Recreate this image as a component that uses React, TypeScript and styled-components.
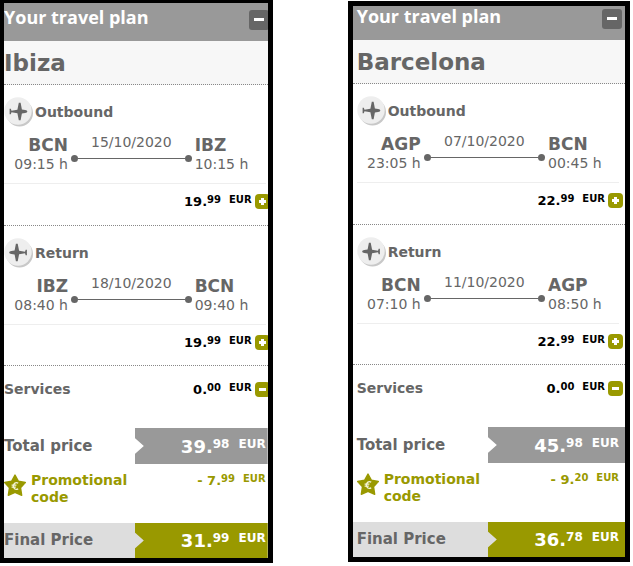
import React from 'react';
import styled, { createGlobalStyle } from 'styled-components';

const GlobalStyle = createGlobalStyle`
  * { box-sizing: border-box; }
  body {
    margin: 0;
    background: #fff;
    color: #666;
    font-family: Verdana, 'DejaVu Sans', sans-serif;
    font-size: 14px;
    line-height: 17px;
  }
`;

const Page = styled.main`
  display: flex;
  align-items: flex-start;
  gap: 75px;
  padding-right: 3px;
`;

const Card = styled.section<{ $compact: boolean }>`
  --start: ${(p) => (p.$compact ? '0px' : '4px')};
  --end: ${(p) => (p.$compact ? '2px' : '6px')};
  flex: ${(p) => (p.$compact ? 273 : 282)} 1 0;
  min-width: 0;
  margin-top: ${(p) => (p.$compact ? 0 : 1)}px;
  border: solid #000;
  border-width: ${(p) => (p.$compact ? '3px 5px 5px 4px' : '5px')};
  overflow: hidden;
`;

const Header = styled.header<{ $compact: boolean }>`
  display: flex;
  justify-content: space-between;
  align-items: flex-start;
  padding: ${(p) => (p.$compact ? 7 : 3)}px var(--end) 11px var(--start);
  background: #999;
`;

const Heading = styled.h2`
  margin: -5px 0 0;
  color: #fff;
  font: 700 18px/25px 'Open Sans', sans-serif;
`;

const IconButton = styled.button<{ $large?: boolean }>`
  display: block;
  flex: none;
  margin: 0 ${(p) => (p.$large ? -3 : -4)}px 0 3px;
  padding: 0;
  width: ${(p) => (p.$large ? 20 : 15)}px;
  height: ${(p) => (p.$large ? 20 : 15)}px;
  border: 0;
  border-radius: ${(p) => (p.$large ? 3 : 4)}px;
  background: ${(p) => (p.$large ? '#666' : '#990')};
  cursor: pointer;

  svg { display: block; fill: #fff; }
`;

const Destination = styled.h1`
  margin: 0;
  padding: 9px var(--end) 8px var(--start);
  border-bottom: 1px dotted #888;
  background: #f7f7f7;
  font-size: 23px;
  line-height: 26px;
`;

const Leg = styled.section<{ $last?: boolean }>`
  padding: 12px var(--end) ${(p) => (p.$last ? 15 : 16)}px var(--start);
  border-bottom: 1px dotted #888;
`;

const LegTitle = styled.h3`
  display: flex;
  align-items: center;
  gap: 1px;
  height: 30px;
  margin: 0 0 8px;
  font-size: 14px;
`;

const Route = styled.div`
  display: grid;
  grid-template-columns: 64px 1fr 71px;
  column-gap: 3px;
  padding-bottom: 9px;
  border-bottom: 1px solid #eee;
`;

const Stop = styled.div<{ $align: 'left' | 'right' }>`
  text-align: ${(p) => p.$align};
  line-height: 19px;
  white-space: nowrap;
`;

const Airport = styled.strong`
  display: block;
  font-size: 17px;
  line-height: 20px;
`;

const Track = styled.div`
  text-align: center;
  line-height: 15px;
`;

const TrackLine = styled.div`
  display: flex;
  align-items: center;
  margin-top: 5px;

  &::before, &::after {
    content: '';
    width: 7px;
    height: 7px;
    border-radius: 50%;
    background: #666;
  }
`;

const Rail = styled.span`
  flex: 1;
  height: 1px;
  background: #666;
`;

const PriceRow = styled.div`
  display: flex;
  align-items: center;
  justify-content: flex-end;
  height: 15px;
  margin-top: 10px;
`;

const Services = styled.div`
  display: flex;
  align-items: center;
  height: 15px;
  margin: 16px var(--end) 31px var(--start);
`;

const Label = styled.strong`
  flex: 1;
`;

const Amount = styled.strong<{ $size: 'small' | 'large'; $color: string }>`
  color: ${(p) => p.$color};
  font-size: ${(p) => (p.$size === 'large' ? 18 : 13)}px;
  line-height: 17px;
  white-space: nowrap;

  span {
    margin-right: ${(p) => (p.$size === 'large' ? 9 : 8)}px;
  }
  span, small {
    font-size: ${(p) => (p.$size === 'large' ? 12 : 10)}px;
    line-height: 1;
    vertical-align: ${(p) => (p.$size === 'large' ? 5 : 3)}px;
  }
`;

const SumRow = styled.div<{ $final?: boolean }>`
  display: flex;
  align-items: stretch;
  height: ${(p) => (p.$final ? 35 : 36)}px;
  padding-left: var(--start);
  background: ${(p) => (p.$final ? '#ddd' : '#fff')};
`;

const SumLabel = styled.strong`
  flex: 1;
  align-self: center;
  font-size: 15px;
`;

const SumValue = styled.div<{ $final?: boolean }>`
  display: flex;
  align-items: center;
  justify-content: flex-end;
  width: calc(50% + var(--end) / 2);
  padding-right: var(--end);
  background: ${(p) => (p.$final ? '#990' : '#999')};
  clip-path: polygon(0 0, 100% 0, 100% 100%, 0 100%, 0 calc(50% + 8px), 9px 50%, 0 calc(50% - 8px));
`;

const Promotion = styled.div`
  display: flex;
  align-items: flex-start;
  gap: 5px;
  margin: 8px var(--end) 17px var(--start);
  color: #990;

  svg { flex: none; margin-top: 2px; }
`;

const PromotionLabel = styled.strong`
  flex: 1;
`;

const Plane = ({ back }: { back?: boolean }) => (
  <svg width="30" height="30" viewBox="0 0 30 30" aria-hidden="true">
    <circle cx="15.5" cy="16" r="13.5" fill="#c8c8c8" />
    <circle cx="14" cy="14" r="13.7" fill="#eee" />
    <g transform={back ? 'translate(28.5 0) scale(-1 1)' : undefined} fill="#666">
      <path d="M5.6 11.8h1.2l.7 1.9 5.9-1 1.4-6.9h1.8l1.3 6.7 3.2.5c1.4.3 2.2.8 2.2 1.5s-.8 1.2-2.2 1.5l-3.2.5-1.3 6.7h-1.8l-1.4-6.9-5.9-1-.7 1.9H5.6z" />
    </g>
  </svg>
);

const Star = () => (
  <svg width="22" height="23" viewBox="0 0 22 23" aria-hidden="true">
    <path d="M11 1l3.3 6.2 7 1.3-4.8 5.2 1.2 7.6L11 18.4l-6.7 2.9 1.2-7.6L.7 8.5l7-1.3z" fill="#990" stroke="#990" strokeWidth="1.4" strokeLinejoin="round" />
    <path d="M14.2 9.2c-2.5-1.2-4.8 0-4.8 2.9s2.3 4 4.8 2.8M7.6 11.2h4.8M7.6 13.1h4.2" fill="none" stroke="#f5f5d8" strokeWidth="1.3" />
  </svg>
);

const Sign = ({ plus }: { plus?: boolean }) => (
  <svg width="15" height="15" aria-hidden="true">
    <rect x="4" y="6" width="7" height="3" />
    {plus && <rect x="6" y="4" width="3" height="7" />}
  </svg>
);

type Size = 'small' | 'large';
const Price = ({ value, size = 'small', color = '#000' }: { value: string; size?: Size; color?: string }) => {
  const [whole, cents] = value.split('.');
  return (
    <Amount $size={size} $color={color}>
      {whole}.<span>{cents}</span><small>EUR</small>
    </Amount>
  );
};

interface Flight { from: string; departs: string; date: string; to: string; arrives: string; price: string }
interface Trip {
  compact: boolean; city: string; outbound: Flight; inbound: Flight;
  total: string; discount: string; final: string;
}

const FlightLeg = ({ title, flight, back }: { title: string; flight: Flight; back?: boolean }) => (
  <Leg $last={back}>
    <LegTitle><Plane back={back} />{title}</LegTitle>
    <Route>
      <Stop $align="right"><Airport>{flight.from}</Airport>{flight.departs} h</Stop>
      <Track>{flight.date}<TrackLine><Rail /></TrackLine></Track>
      <Stop $align="left"><Airport>{flight.to}</Airport>{flight.arrives} h</Stop>
    </Route>
    <PriceRow>
      <Price value={flight.price} />
      <IconButton type="button" aria-label={`Show ${title} price details`}><Sign plus /></IconButton>
    </PriceRow>
  </Leg>
);

const TravelPlan = ({ trip }: { trip: Trip }) => (
  <Card $compact={trip.compact}>
    <Header $compact={trip.compact}>
      <Heading>Your travel plan</Heading>
      <IconButton $large type="button" aria-label="Collapse travel plan">
        <svg width="20" height="20" aria-hidden="true"><rect x="5" y="8" width="10" height="3" /></svg>
      </IconButton>
    </Header>
    <Destination>{trip.city}</Destination>
    <FlightLeg title="Outbound" flight={trip.outbound} />
    <FlightLeg title="Return" flight={trip.inbound} back />
    <Services>
      <Label>Services</Label>
      <Price value="0.00" />
      <IconButton type="button" aria-label="Hide services"><Sign /></IconButton>
    </Services>
    <SumRow>
      <SumLabel>Total price</SumLabel>
      <SumValue><Price size="large" color="#fff" value={trip.total} /></SumValue>
    </SumRow>
    <Promotion>
      <Star />
      <PromotionLabel>Promotional<br />code</PromotionLabel>
      <Price color="#990" value={`- ${trip.discount}`} />
    </Promotion>
    <SumRow $final>
      <SumLabel>Final Price</SumLabel>
      <SumValue $final><Price size="large" color="#fff" value={trip.final} /></SumValue>
    </SumRow>
  </Card>
);

const trips: Trip[] = [
  {
    compact: true,
    city: 'Ibiza',
    outbound: { from: 'BCN', departs: '09:15', date: '15/10/2020', to: 'IBZ', arrives: '10:15', price: '19.99' },
    inbound: { from: 'IBZ', departs: '08:40', date: '18/10/2020', to: 'BCN', arrives: '09:40', price: '19.99' },
    total: '39.98',
    discount: '7.99',
    final: '31.99',
  },
  {
    compact: false,
    city: 'Barcelona',
    outbound: { from: 'AGP', departs: '23:05', date: '07/10/2020', to: 'BCN', arrives: '00:45', price: '22.99' },
    inbound: { from: 'BCN', departs: '07:10', date: '11/10/2020', to: 'AGP', arrives: '08:50', price: '22.99' },
    total: '45.98',
    discount: '9.20',
    final: '36.78',
  },
];

export default function App() {
  return (
    <>
      <GlobalStyle />
      <Page>
        {trips.map((trip) => <TravelPlan key={trip.city} trip={trip} />)}
      </Page>
    </>
  );
}
